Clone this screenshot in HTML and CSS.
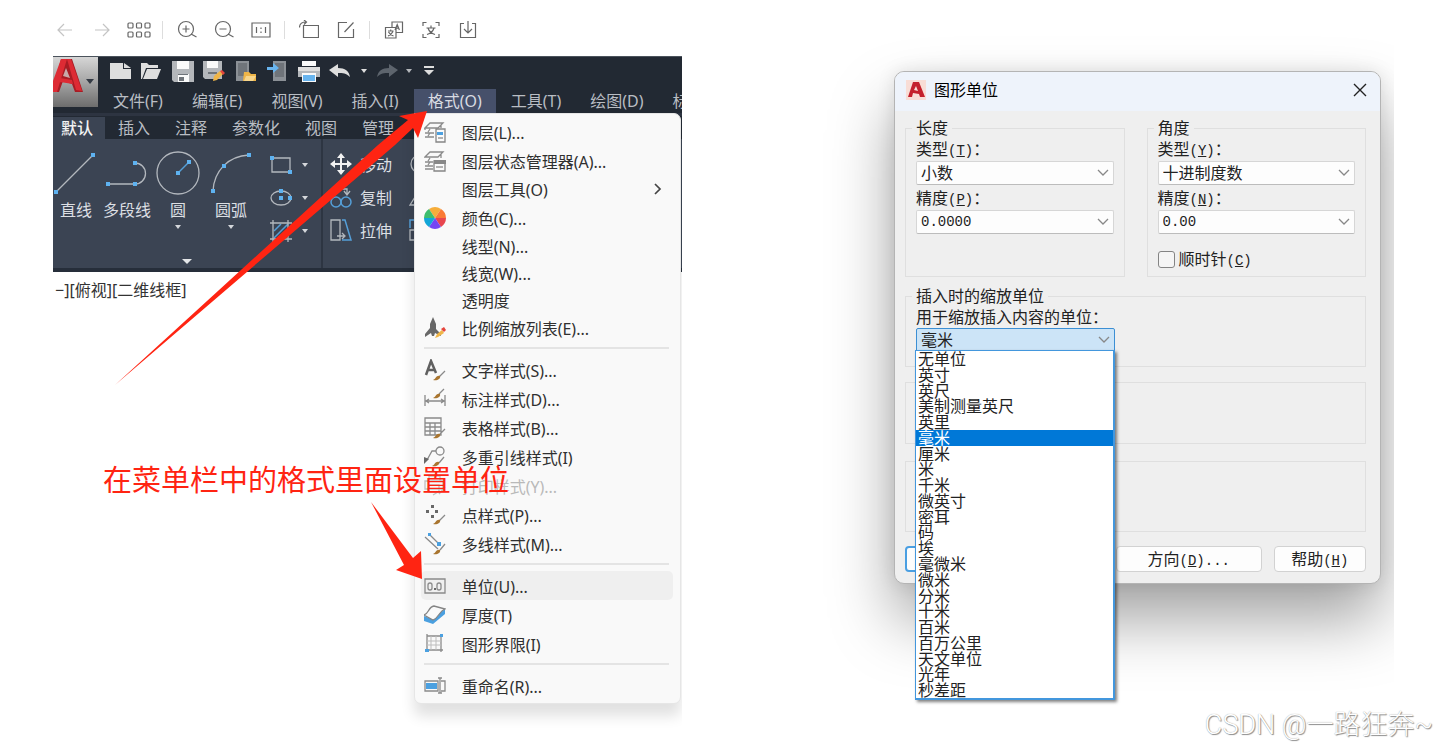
FILE: index.html
```html
<!DOCTYPE html>
<html lang="zh-CN">
<head>
<meta charset="utf-8">
<title>图形单位</title>
<link rel="stylesheet" href="styles.css">
</head>
<body>
<main class="page">
  <section class="viewer">
    <div class="toolbar" role="toolbar">
      <button class="tool faint" aria-label="后退"><svg viewBox="0 0 20 20"><path d="M17 10H3M9 4l-6 6 6 6"/></svg></button>
      <button class="tool faint" aria-label="前进"><svg viewBox="0 0 20 20"><path d="M3 10h14M11 4l6 6-6 6"/></svg></button>
      <button class="tool" aria-label="缩略图"><svg class="wide" viewBox="0 0 24 20"><rect x="1" y="3" width="5" height="5" rx="1"/><rect x="9.500" y="3" width="5" height="5" rx="1"/><rect x="18" y="3" width="5" height="5" rx="1"/><rect x="1" y="12" width="5" height="5" rx="1"/><rect x="9.500" y="12" width="5" height="5" rx="1"/><rect x="18" y="12" width="5" height="5" rx="1"/></svg></button>
      <span class="divider"></span>
      <button class="tool" aria-label="放大"><svg viewBox="0 0 20 20"><circle cx="9" cy="9" r="7.500"/><path d="M14 14l5.500 3M5.500 9h7M9 5.500v7"/></svg></button>
      <button class="tool" aria-label="缩小"><svg viewBox="0 0 20 20"><circle cx="9" cy="9" r="7.500"/><path d="M14 14l5.500 3M5.500 9h7"/></svg></button>
      <button class="tool" aria-label="原始大小"><svg viewBox="0 0 20 20"><path d="M1 3h18v14H1zM5.500 7v6M14.500 7v6M10 7.500v1.500M10 11.500v1.500"/></svg></button>
      <span class="divider"></span>
      <button class="tool" aria-label="旋转"><svg viewBox="0 0 20 20"><path d="M4.500 5.500h15v12h-15zM.5 7.500C.5 4 3 2 7 2M5 0l2.500 2L5 4.500"/></svg></button>
      <button class="tool" aria-label="编辑"><svg viewBox="0 0 20 20"><path d="M11 2.500H2.500v15h15V9M8.500 12L17.500 2.500"/></svg></button>
      <span class="divider"></span>
      <button class="tool" aria-label="翻译"><svg viewBox="0 0 20 20"><path d="M8 7.500V2h10.500v10.500H12M1.500 7.500H12v10.500H1.500zM11 10l2.200-5.500 2.200 5.500M11.800 8.200h2.800M4 11h5.500M6.700 9.500V11M9 11.500c-1 2-2.500 3.500-5 4.500M4.500 12c1 2 2.500 3 5 4"/></svg></button>
      <button class="tool" aria-label="识别文字"><svg viewBox="0 0 20 20"><path d="M2 6V2.500h3.500M14.500 2.500H18V6M18 14v3.500h-3.500M5.500 17.500H2V14M5.500 8h9M10 5.500V8M13 8c-1 3.200-3.500 5.500-7 6.500M7 8c1 3.200 3.500 5.500 7 6.500"/></svg></button>
      <button class="tool" aria-label="下载"><svg viewBox="0 0 20 20"><path d="M6 3.500H2.500v14h15v-14H14M10 1v11.500M6 9l4 4 4-4"/></svg></button>
    </div>

    <div class="cad">
      <header class="cad-head">
        <button class="app-button" aria-label="应用程序菜单">
          <svg viewBox="0 0 45 50"><path class="logo-dark" d="M0 33L8 2h11l11 33h-8l-3-8-9-3-4 11H0z"/><path class="logo-red" d="M0 24L8 2h6L4 35H0zM14 2h4l11 32-6-1zM7 21l12 2 1 4-13-2z"/><path class="logo-cut" d="M13 11l4 10-7-2z"/><path class="caret" d="M33 22h8l-4 5z"/></svg>
        </button>
        <div class="head-rows">
          <div class="quick">
            <div class="quick-main">
              <svg viewBox="0 0 22 22"><path class="pale" d="M1 3h13v6h8v10H1z"/><path class="pale" d="M15 3l7 5h-7z"/></svg>
              <svg viewBox="0 0 22 22"><path class="pale" d="M1 3h6l2 2h9v3H6L2 19H1z"/><path class="pale" d="M7 9h14l-4 10H3z"/></svg>
              <svg viewBox="0 0 22 22"><path class="silver" d="M0 1h22v21H2l-2-2z"/><path class="white" d="M5 1h12v8H5zM6 14h11v8H6z"/><path class="slot" d="M6 14h10v1H6zM7 17h5v4H7z"/></svg>
              <svg viewBox="0 0 22 22"><path class="silver" d="M0 1h19v18H2l-2-2z"/><path class="white" d="M4 1h11v7H4z"/><path class="slot" d="M5 12h9v2H5z"/><path class="gold" d="M10 21l1-5 6-5 3 3-6 6z"/><path class="hot" d="M17 11l2-1 3 3-2 2z"/></svg>
              <svg viewBox="0 0 22 22"><path class="steel" d="M1 1h13v20H1z"/><path class="slot" d="M3 3h9v13H3z"/><path class="gold" d="M9 12h5l2 2h5v7H8z"/><path class="cream" d="M11 16h10l-3 5h-9z"/></svg>
              <svg viewBox="0 0 22 22"><path class="steel" d="M7 1h13v20H7z"/><path class="slot" d="M9 3h9v14H9z"/><path class="sky" d="M1 7h6V3l6 5-6 5v-3H1z"/></svg>
              <svg viewBox="0 0 22 22"><path class="white" d="M4 1h14v5H4z"/><path class="silver" d="M0 8h22v9H0z"/><path class="pale" d="M0 7h22v4H0z"/><path class="white" d="M4 13h14v9H4z"/><path class="sky" d="M5 15h12v6H5z"/></svg>
              <svg viewBox="0 0 22 22"><path class="pale" d="M0 10l9-6v4c7 0 11 3 12 9-4-4-7-4-12-4v4z"/></svg>
            </div>
            <svg class="caret-icon" viewBox="0 0 12 12"><path class="pale" d="M3 4h6L6 8z"/></svg>
            <svg class="redo" viewBox="0 0 22 22"><path class="dim" d="M22 10l-9-6v4C6 8 2 11 1 17c4-4 7-4 12-4v4z"/></svg>
            <svg class="caret-icon" viewBox="0 0 12 12"><path class="silver" d="M3 4h6L6 8z"/></svg>
            <svg class="caret-icon last" viewBox="0 0 12 12"><path class="pale" d="M1 1h10v2H1zM1 5h10l-5 5z"/></svg>
          </div>
          <nav class="menubar">
            <button class="menu-tab">文件(F)</button>
            <button class="menu-tab">编辑(E)</button>
            <button class="menu-tab">视图(V)</button>
            <button class="menu-tab">插入(I)</button>
            <div class="menu-anchor">
              <button class="menu-tab open" aria-expanded="true">格式(O)</button>
              <div class="menu" role="menu">
                <button class="item" role="menuitem"><svg viewBox="0 0 22 22"><path class="line" d="M6 2h13l-5 5H1zM1 7v2M1 12h9M1 16h9M4 11l2-3M4 15l2-3M17 4v3"/><path class="card" d="M12 8h9v13h-9z"/><path class="blue" d="M13 11h6v3h-6z"/><path class="line" d="M14 17h5"/></svg>图层(L)...</button>
                <button class="item" role="menuitem"><svg viewBox="0 0 22 22"><path class="line" d="M6 2h13l-5 5H1zM1 12h8M1 16h8M1 19h8M4 11l2-3M4 15l2-3M17 4v4"/><path class="card" d="M10 11h11v10H10z"/><path class="grayfill" d="M10 10h12v4H10z"/><path class="line" d="M12 17h7"/></svg>图层状态管理器(A)...</button>
                <button class="item plain" role="menuitem">图层工具(O)<svg class="more" viewBox="0 0 10 12"><path d="M3 1l5 5-5 5"/></svg></button>
                <button class="item" role="menuitem"><svg viewBox="0 0 22 22"><path fill="#f6ad3a" d="M11 11L5 2a11 11 0 0112 0z"/><path fill="#fa7a35" d="M11 11l6-9a11 11 0 015 9z"/><path fill="#e8464f" d="M11 11h11a11 11 0 01-5 9z"/><path fill="#7545f4" d="M11 11l6 9a11 11 0 01-12 0z"/><path fill="#12a6d8" d="M11 11l-6 9a11 11 0 01-5-9z"/><path fill="#3dbd6e" d="M11 11H0a11 11 0 015-9z"/></svg>颜色(C)...</button>
                <button class="item plain short" role="menuitem">线型(N)...</button>
                <button class="item plain short" role="menuitem">线宽(W)...</button>
                <button class="item plain short" role="menuitem">透明度</button>
                <button class="item" role="menuitem"><svg viewBox="0 0 22 22"><path class="darkfill" d="M9 0l3 7v5l5 5v2l-6-3-1 3H8l-1-3-6 4v-3l5-6V7z"/><path class="gold" d="M11 21l2-4 5-4 2 3-6 4z"/><path class="hot" d="M17 12l3-2 2 3-2 2z"/></svg>比例缩放列表(E)...</button>
                <hr class="rule">
                <button class="item" role="menuitem"><svg viewBox="0 0 22 22"><path class="stroke-a" d="M2 16L7 2l5 12M4 11h6"/><path class="line" d="M21 12l-6 6"/><path class="brush" d="M9 21c3-1 3-5 7-4 1 3-3 5-7 4z"/></svg>文字样式(S)...</button>
                <button class="item" role="menuitem"><svg viewBox="0 0 22 22"><path class="line" d="M1 7v11M21 7v11M1 13h20M5 11l-3 2 3 2M17 11l3 2-3 2M20 1l-5 5"/><path class="brush" d="M9 10c3-1 3-5 7-4 1 3-3 5-7 4z"/></svg>标注样式(D)...</button>
                <button class="item" role="menuitem"><svg viewBox="0 0 22 22"><path class="line" d="M1 1h16v17H1zM1 6h16M1 10h16M1 14h16M6 6v12M11 6v12M21 12l-5 5"/><path class="brush" d="M9 21c3-1 3-5 7-4 1 3-3 5-7 4z"/></svg>表格样式(B)...</button>
                <button class="item" role="menuitem"><svg viewBox="0 0 22 22"><circle class="line" cx="16" cy="5" r="4"/><path class="line" d="M12 5H8l-5 9M20 11l-5 6"/><path class="darkfill" d="M0 11l5 2-5 5z"/><path class="brush" d="M8 20c3-1 3-5 7-4 1 3-3 5-7 4z"/></svg>多重引线样式(I)</button>
                <button class="item" role="menuitem" disabled><svg viewBox="0 0 22 22"><path class="line" d="M5 1h11v5H5zM1 6h18v8H1zM5 10h10v7H5zM21 12l-6 7M9 20l5-3"/></svg>打印样式(Y)...</button>
                <button class="item" role="menuitem"><svg viewBox="0 0 22 22"><path class="darkfill" d="M7 1h3v3H7zM2 6h3v3H2zM11 6h3v3h-3zM7 11h3v3H7z"/><path class="line" d="M21 11l-6 6"/><path class="brush" d="M9 20c3-1 3-5 7-4 1 3-3 5-7 4z"/></svg>点样式(P)...</button>
                <button class="item" role="menuitem"><svg viewBox="0 0 22 22"><path class="line" d="M1 4l13 12M5 1l11 11M21 11l-5 6"/><path class="blue" d="M4 0h3v3H4zM13 9h4v4h-4z"/><path class="brush" d="M9 21c3-1 3-5 7-4 1 3-3 5-7 4z"/></svg>多线样式(M)...</button>
                <hr class="rule">
                <button class="item hover" role="menuitem"><svg viewBox="0 0 22 22"><path class="line" d="M1 4h20v14H1z"/><rect class="line" x="4" y="8" width="4" height="7" rx="2"/><rect class="line" x="13" y="8" width="4" height="7" rx="2"/><path class="darkfill" d="M10 13h2v2h-2z"/></svg>单位(U)...</button>
                <button class="item" role="menuitem"><svg viewBox="0 0 22 22"><path class="blue" d="M0 12l8 3L21 5v5L9 20l-9-3z"/><path class="card" d="M0 11c5-1 4-8 10-9l11 3c-6 2-6 9-12 11z"/></svg>厚度(T)</button>
                <button class="item" role="menuitem"><svg viewBox="0 0 22 22"><path class="line" d="M3 1v18M1 17h18M17 3v16M3 3h16"/><path class="thin" d="M7 3v14M12 3v14M3 8h14M3 12h14"/><path class="blue" d="M16 1h3v3h-3zM1 16h4v3H1z"/></svg>图形界限(I)</button>
                <hr class="rule">
                <button class="item" role="menuitem"><svg viewBox="0 0 22 22"><path class="line" d="M1 6h13v10H1zM17 6h4v10h-4M14 3h4M16 3v15M14 18h4"/><path class="blue" d="M2 8h11v6H2z"/></svg>重命名(R)...</button>
              </div>
            </div>
            <button class="menu-tab">工具(T)</button>
            <button class="menu-tab">绘图(D)</button>
            <button class="menu-tab">标</button>
          </nav>
        </div>
      </header>
      <nav class="tabs">
        <button class="tab active">默认</button><button class="tab">插入</button><button class="tab">注释</button><button class="tab">参数化</button><button class="tab">视图</button><button class="tab">管理</button>
      </nav>
      <div class="ribbon">
        <div class="panel">
          <div class="panel-tools">
            <button class="big"><svg viewBox="0 0 46 46"><path class="draw" d="M3 41L40 4"/><path class="node" d="M1 39h4v4H1zM38 2h4v4h-4z"/></svg>直线</button>
            <button class="big medium"><svg viewBox="0 0 46 46"><path class="draw" d="M4 33h27a10 10 0 000-21"/><path class="node" d="M2 31h4v4H2zM29 31h4v4h-4zM29 10h4v4h-4z"/></svg>多段线</button>
            <button class="big"><svg viewBox="0 0 46 46"><circle class="draw" cx="23" cy="22" r="21"/><path class="accent" d="M23 22L34 11"/><path class="node" d="M21 20h4v4h-4zM32 9h4v4h-4z"/></svg>圆<span class="drop"></span></button>
            <button class="big large"><svg viewBox="0 0 46 46"><path class="draw" d="M5 40C6 20 20 5 41 4"/><path class="node" d="M3 38h4v4H3zM14 13h4v4h-4zM39 2h4v4h-4z"/></svg>圆弧<span class="drop"></span></button>
            <div class="minis">
              <button class="mini" aria-label="矩形"><svg viewBox="0 0 22 22"><path class="draw" d="M2 4h18v14H2z"/><path class="node" d="M0 2h4v4H0zM18 16h4v4h-4z"/></svg><span class="drop"></span></button>
              <button class="mini" aria-label="椭圆"><svg viewBox="0 0 22 22"><ellipse class="draw" cx="11" cy="11" rx="10" ry="7"/><path class="node" d="M9 9h4v4H9zM9 2h4v4H9zM18 9h4v4h-4z"/></svg><span class="drop"></span></button>
              <button class="mini" aria-label="填充"><svg viewBox="0 0 22 22"><path class="accent" d="M4 11l7-7M4 18L18 4M10 18l8-8"/><path class="draw" d="M3 0v22M18 0v22M0 3h22M0 19h22"/></svg><span class="drop"></span></button>
            </div>
          </div>
          <span class="expander"></span>
        </div>
        <div class="panel modify">
          <button class="row-tool"><svg viewBox="0 0 22 22"><path class="movefill" d="M11 0l4 5h-3v5h5V7l5 4-5 4v-3h-5v5h3l-4 5-4-5h3v-5H5v3l-5-4 5-4v3h5V5H7z"/></svg>移动</button>
          <button class="row-tool"><svg viewBox="0 0 22 22"><circle class="accent" cx="6" cy="16" r="5"/><circle class="accent" cx="16" cy="16" r="5"/><path class="draw" d="M4 8V3h13v5M14 5l3 4 3-4"/></svg>复制</button>
          <button class="row-tool"><svg viewBox="0 0 22 22"><path class="draw" d="M1 1h9v20H1zM7 17h7M12 14l3 3-3 3"/><path class="accent" d="M12 1h3l6 20h-9"/></svg>拉伸</button>
        </div>
        <div class="panel edge">
          <svg viewBox="0 0 22 22"><circle class="draw" cx="11" cy="11" r="9"/></svg>
          <svg viewBox="0 0 22 22"><path class="draw" d="M1 19L11 3v16z"/></svg>
          <svg viewBox="0 0 22 22"><path class="accent" d="M1 9V1h18"/><path class="draw" d="M1 11h9v10H1z"/></svg>
        </div>
      </div>
      <p class="viewport-label">−][俯视][二维线框]</p>
    </div>

    <p class="callout">在菜单栏中的格式里面设置单位</p>
    <svg class="arrows" viewBox="0 0 629 750"><path d="M62 385L325 145l30-25-9-4 28-5-9 27-5-10-18 17z"/><path d="M318 502l42 56 8-7 1 28-26-9 8-5z"/></svg>
  </section>

  <section class="stage">
    <form class="dialog">
      <header class="titlebar">
        <svg class="badge" viewBox="0 0 20 20"><path class="badge-bg" d="M0 0h20v20H0z"/><path class="badge-a" d="M2 17L7 2h6l6 15h-5l-1-3-6-1-1 4zM8 10l4 1-2-5z" fill-rule="evenodd"/></svg>
        <h1 class="title">图形单位</h1>
        <button type="button" class="close" aria-label="关闭"><svg viewBox="0 0 14 14"><path d="M1 1l12 12M13 1L1 13"/></svg></button>
      </header>
      <div class="dialog-body">
        <div class="pair">
          <fieldset class="group">
            <legend>长度</legend>
            <label for="len-type">类型<span class="latin">(<u>T</u>)</span>：</label>
            <div class="combo"><select id="len-type"><option>小数</option></select><svg viewBox="0 0 10 6"><path d="M0 0l5 5 5-5"/></svg></div>
            <label for="len-prec">精度<span class="latin">(<u>P</u>)</span>：</label>
            <div class="combo"><select id="len-prec" class="digits"><option>0.0000</option></select><svg viewBox="0 0 10 6"><path d="M0 0l5 5 5-5"/></svg></div>
          </fieldset>
          <fieldset class="group">
            <legend>角度</legend>
            <label for="ang-type">类型<span class="latin">(<u>Y</u>)</span>：</label>
            <div class="combo"><select id="ang-type"><option>十进制度数</option></select><svg viewBox="0 0 10 6"><path d="M0 0l5 5 5-5"/></svg></div>
            <label for="ang-prec">精度<span class="latin">(<u>N</u>)</span>：</label>
            <div class="combo"><select id="ang-prec" class="digits"><option>0.00</option></select><svg viewBox="0 0 10 6"><path d="M0 0l5 5 5-5"/></svg></div>
            <div class="check"><input type="checkbox" id="clockwise"><label for="clockwise">顺时针<span class="latin">(<u>C</u>)</span></label></div>
          </fieldset>
        </div>
        <fieldset class="group scale">
          <legend>插入时的缩放单位</legend>
          <label for="unit">用于缩放插入内容的单位：</label>
          <div class="combo unit">
            <select id="unit" class="active"><option>毫米</option></select><svg viewBox="0 0 10 6"><path d="M0 0l5 5 5-5"/></svg>
            <ul class="options" role="listbox">
              <li role="option">无单位</li><li role="option">英寸</li><li role="option">英尺</li><li role="option">美制测量英尺</li><li role="option">英里</li><li role="option" class="selected" aria-selected="true">毫米</li><li role="option">厘米</li><li role="option">米</li><li role="option">千米</li><li role="option">微英寸</li><li role="option">密耳</li><li role="option">码</li><li role="option">埃</li><li role="option">毫微米</li><li role="option">微米</li><li role="option">分米</li><li role="option">十米</li><li role="option">百米</li><li role="option">百万公里</li><li role="option">天文单位</li><li role="option">光年</li><li role="option">秒差距</li>
            </ul>
          </div>
        </fieldset>
        <div class="box sample"></div>
        <div class="box light"></div>
        <div class="actions">
          <button type="button" class="btn primary" aria-label="确定"></button>
          <button type="button" class="btn" aria-label="取消"></button>
          <button type="button" class="btn wide-btn">方向<span class="latin">(<u>D</u>)...</span></button>
          <button type="button" class="btn">帮助<span class="latin">(<u>H</u>)</span></button>
        </div>
      </div>
    </form>
  </section>
  <p class="watermark">CSDN @一路狂奔~</p>
</main>
</body>
</html>
```
FILE: styles.css
```css
* { box-sizing: border-box; }
body { margin: 0; background: #fff; font-family: "Noto Sans", "Noto Sans CJK SC", sans-serif; font-size: 16px; color: #333; }
button { font: inherit; color: inherit; background: none; border: 0; padding: 0; margin: 0; }
svg { display: block; fill: none; }
p { margin: 0; }

.page { position: relative; display: grid; grid-template-columns: minmax(0, 629fr) minmax(0, 574fr); gap: 138px; min-height: 100vh; padding: 0 42px 0 53px; overflow: hidden; }
.viewer { position: relative; display: flex; flex-direction: column; }
.stage { padding: 71px 13px 0 74px; overflow: hidden; }

/* image viewer toolbar */
.toolbar { display: flex; align-items: center; height: 56px; padding-top: 3px; margin-left: -7px; }
.tool { display: grid; place-items: center; width: 37px; height: 30px; }
.tool svg { width: 20px; height: 20px; stroke: #666; stroke-width: 1.2; }
.tool svg.wide { width: 24px; }
.tool.faint svg { stroke: #c4c4c4; }
.divider { width: 1px; height: 18px; margin: 0 5px; background: #ddd; }

/* CAD window */
.cad { flex: 1; overflow: hidden; background: #fff; }
.cad-head { display: flex; align-items: flex-start; background: #222933; border-top: 1px solid #4b535c; }
.app-button { flex: none; width: 45px; height: 50px; background: linear-gradient(#d6d6d6, #a5a5a5 50%, #6d6d6d); }
.app-button svg { width: 45px; height: 50px; }
.logo-dark { fill: #a81c24; }
.logo-red { fill: #dd2b34; }
.logo-cut { fill: #c9a9a9; }
.caret { fill: #333a44; }
.head-rows { flex: 1; min-width: 0; }
.quick { display: flex; align-items: center; height: 28px; padding-left: 6px; }
.quick-main { display: grid; grid-template-columns: repeat(8, 1fr); justify-items: center; width: 252px; }
.quick svg { width: 22px; height: 22px; }
.quick svg.caret-icon { width: 12px; height: 12px; margin: 0 3px 0 2px; }
.quick svg.last { margin-left: 5px; }
.quick svg.redo { margin: 0 3px; }
.pale { fill: #dedede; }
.white { fill: #fafafa; }
.silver { fill: #b4b7bb; }
.slot { fill: #6f747a; }
.steel { fill: #8b9096; }
.gold { fill: #efb548; }
.cream { fill: #f8d68c; }
.sky { fill: #68b4ee; }
.hot { fill: #e5453c; }
.dim { fill: #5d646d; }
.menubar { display: flex; gap: 1px; margin-top: 4px; padding-left: 1px; height: 24px; white-space: nowrap; color: #b9bdc3; }
.menu-tab { height: 24px; padding: 0 14px; line-height: 24px; }
.menu-tab.open { background: #46506a; color: #d8dbe2; }
.menu-anchor { position: relative; }
.tabs { display: flex; height: 26px; padding-top: 1px; background: #222933; border-top: 3px solid #2d3441; color: #b9bdc3; }
.tab { padding: 0 12px 0 13px; line-height: 20px; }
.tab.active { padding-left: 8px; background: #3b4453; color: #f2f2f2; font-weight: 500; }

/* ribbon */
.ribbon { display: flex; height: 133px; background: #3b4453; border-bottom: 4px solid #262e3a; color: #dcdfe3; }
.panel { display: flex; flex-direction: column; }
.panel:first-child { border-right: 2px solid #2d3542; }
.panel-tools { display: flex; height: 116px; padding-top: 9px; }
.big { display: flex; flex-direction: column; align-items: center; width: 46px; padding-top: 3px; line-height: 18px; }
.big.medium { width: 56px; }
.big.large { width: 60px; }
.big svg { width: 46px; height: 46px; margin-bottom: 4px; }
.drop { width: 0; border: 3px solid transparent; border-top: 4px solid #d4d7db; border-bottom: 0; }
.big .drop { margin-top: 6px; }
.expander { align-self: center; border: 5px solid transparent; border-top: 5px solid #e4e6e8; border-bottom: 0; margin-top: 4px; }
.minis { padding-left: 9px; }
.mini { display: flex; align-items: center; gap: 10px; width: 51px; height: 33px; }
.mini svg { width: 22px; height: 22px; }
.draw { stroke: #b3b8be; stroke-width: 1.3; }
.accent { stroke: #559fd8; stroke-width: 1.5; }
.node { fill: #5eb2f0; }
.movefill { fill: #f2f2f2; }
.modify { padding: 8px 0 0 7px; }
.row-tool { display: flex; align-items: center; gap: 8px; height: 33px; }
.row-tool svg, .edge svg { width: 22px; height: 22px; }
.edge { padding: 14px 0 0 17px; gap: 11px; }
.viewport-label { padding: 6px 0 0 2px; line-height: 24px; }

/* drop-down menu */
.menu { position: absolute; z-index: 1; top: 100%; left: 0; width: 267px; padding: 3px 7px 3px 6px; background: #f9f9f9; border: 1px solid #e6e6e6; border-radius: 0 7px 7px 7px; box-shadow: 0 12px 14px rgba(0, 0, 0, .12); color: #303030; }
.item { display: flex; align-items: center; gap: 16px; width: 100%; height: 29px; padding-left: 3px; border-radius: 5px; }
.item svg { flex: none; width: 22px; height: 22px; }
.item.plain { height: 28px; padding-left: 41px; }
.item.short { height: 27px; }
.item.hover { background: #efefef; }
.item:disabled { color: #b9b9b9; }
.item:disabled svg { opacity: .5; }
.item svg.more { width: 10px; height: 12px; margin: 0 11px 0 auto; stroke: #444; stroke-width: 1.7; }
.rule { height: 2px; margin: 5px 4px 6px 3px; border: 0; background: #e4e4e4; }
.line { stroke: #8a8a8a; stroke-width: 1.3; }
.thin { stroke: #bdbdbd; stroke-width: 1; }
.card { fill: #fafafa; stroke: #858585; stroke-width: 1.3; }
.blue { fill: #4ba0e0; }
.grayfill { fill: #888; }
.darkfill { fill: #686868; }
.stroke-a { stroke: #606060; stroke-width: 2.5; }
.brush { fill: #a9752f; }

/* annotations over the image */
.callout { position: absolute; z-index: 2; left: 50px; top: 460px; font-size: 29px; line-height: 40px; color: #ff2412; white-space: nowrap; }
.arrows { position: absolute; z-index: 2; left: 0; top: 0; width: 629px; height: 750px; fill: #ff2412; pointer-events: none; }

/* units dialog */
.dialog { border: 1px solid #b4b4b4; border-radius: 10px; background: #efefef; box-shadow: 0 36px 64px rgba(0, 0, 0, .36), 0 0 18px rgba(0, 0, 0, .1); color: #222; }
.titlebar { display: flex; align-items: center; gap: 8px; height: 39px; padding: 0 13px 3px 11px; background: #eef3fb; border-radius: 9px 9px 0 0; }
.badge { width: 20px; height: 20px; }
.badge-bg { fill: #f8ddd6; }
.badge-a { fill: #c4202c; }
.title { margin: 0; font-size: 16px; font-weight: 400; line-height: 24px; color: #000; }
.close { margin-left: auto; }
.close svg { width: 14px; height: 14px; stroke: #222; stroke-width: 1.4; }
.dialog-body { padding: 7px 14px 11px 10px; }
.pair { display: grid; grid-template-columns: 1fr 1fr; gap: 22px; }
.group { min-width: 0; margin: 0; padding: 1px 10px 7px; border: 1px solid #dfdfdf; line-height: 20px; }
.group legend { margin-left: -4px; padding: 0 4px; }
.group label { display: block; height: 20px; }
.latin { font-family: "Liberation Mono", monospace; font-size: 14px; line-height: 1; }
.combo { position: relative; display: grid; align-items: center; margin: 2px 0 3px; }
.combo select { grid-area: 1 / 1; width: 100%; height: 24px; padding: 0 4px; appearance: none; border: 1px solid #d6d6d6; border-bottom-color: #bcbcbc; border-radius: 2px; background: #fdfdfd; font: inherit; line-height: 20px; color: #222; }
.combo select.digits { font-family: "Liberation Mono", monospace; font-size: 14px; }
.combo select.active { background: #cce4f7; border-color: #3c8fd4; }
.combo > svg { grid-area: 1 / 1; justify-self: end; z-index: 1; width: 10px; height: 6px; margin-right: 6px; stroke: #888; stroke-width: 1.3; overflow: visible; pointer-events: none; }
.check { display: flex; align-items: center; gap: 4px; margin-top: 15px; }
.check input { appearance: none; width: 17px; height: 17px; margin: 0; border: 1px solid #848484; border-radius: 3px; background: #f5f5f5; }
.scale { margin-top: 9px; padding-bottom: 12px; }
.combo.unit { width: 199px; margin: 1px 0 2px; }
.options { position: absolute; z-index: 2; top: 22px; left: -1px; display: grid; grid-auto-rows: 1fr; width: 200px; height: 350px; margin: 0; padding: 0; list-style: none; background: #fff; border: 1px solid #4397dd; border-right-width: 2px; border-bottom-width: 2px; box-shadow: 2px 2px 3px rgba(0, 0, 0, .5); line-height: 16px; }
.options li { padding-left: 2px; min-height: 0; }
.options .selected { background: #0078d7; color: #fff; }
.box { border: 1px solid #dfdfdf; }
.sample { height: 62px; margin-top: 15px; }
.light { height: 71px; margin-top: 17px; }
.actions { display: flex; gap: 12px; margin-top: 14px; }
.btn { flex: 92 1 0; height: 26px; border: 1px solid #d2d2d2; border-radius: 4px; background: #fdfdfd; line-height: 22px; }
.btn.primary { border: 2px solid #4a9fe2; }
.btn.wide-btn { flex-grow: 146; }

.watermark { position: absolute; z-index: 3; right: 3px; bottom: 6px; font: 300 27px/38px Roboto, "Noto Sans CJK SC", sans-serif; color: #fff; text-shadow: 1px 1px 1px #8a8a8a, 0 0 1px #999; }
```
